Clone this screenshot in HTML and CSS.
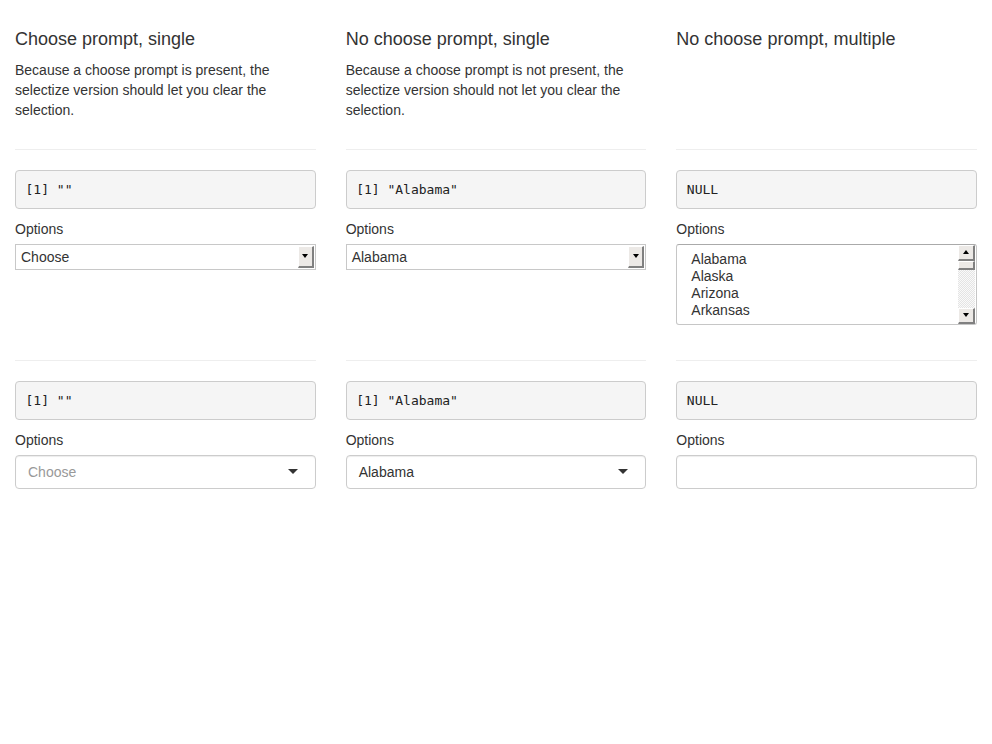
FILE: index.html
```html
<!DOCTYPE html>
<html>
<head>
<meta charset="utf-8">
<link rel="stylesheet" href="styles.css">
</head>
<body>
<div class="page">
  <div class="cell">
    <h4>Choose prompt, single</h4>
    <p>Because a choose prompt is present, the selectize version should let you clear the selection.</p>
  </div>
  <div class="cell">
    <h4>No choose prompt, single</h4>
    <p>Because a choose prompt is not present, the selectize version should not let you clear the selection.</p>
  </div>
  <div class="cell">
    <h4>No choose prompt, multiple</h4>
  </div>

  <div class="cell">
    <hr>
    <pre>[1] ""</pre>
    <div class="form-group">
      <label class="control-label">Options</label>
      <div class="native-select"><span class="ns-text">Choose</span><span class="ns-btn"><span class="tri-down"></span></span></div>
    </div>
  </div>
  <div class="cell">
    <hr>
    <pre>[1] "Alabama"</pre>
    <div class="form-group">
      <label class="control-label">Options</label>
      <div class="native-select"><span class="ns-text">Alabama</span><span class="ns-btn"><span class="tri-down"></span></span></div>
    </div>
  </div>
  <div class="cell">
    <hr>
    <pre>NULL</pre>
    <div class="form-group">
      <label class="control-label">Options</label>
      <div class="listbox">
        <div class="lb-options">
          <div class="lb-opt">Alabama</div>
          <div class="lb-opt">Alaska</div>
          <div class="lb-opt">Arizona</div>
          <div class="lb-opt">Arkansas</div>
        </div>
        <div class="sb">
          <div class="sb-btn"><span class="tri-up"></span></div>
          <div class="sb-thumb"></div>
          <div class="sb-track"></div>
          <div class="sb-btn"><span class="tri-down"></span></div>
        </div>
      </div>
    </div>
  </div>

  <div class="cell">
    <hr>
    <pre>[1] ""</pre>
    <div class="form-group">
      <label class="control-label">Options</label>
      <div class="selectize single"><span class="placeholder">Choose</span></div>
    </div>
  </div>
  <div class="cell">
    <hr>
    <pre>[1] "Alabama"</pre>
    <div class="form-group">
      <label class="control-label">Options</label>
      <div class="selectize single"><span class="item">Alabama</span></div>
    </div>
  </div>
  <div class="cell">
    <hr>
    <pre>NULL</pre>
    <div class="form-group">
      <label class="control-label">Options</label>
      <div class="selectize multi"></div>
    </div>
  </div>
</div>
</body>
</html>
```

FILE: styles.css
```css
html, body {
  margin: 0;
  padding: 0;
  background: #fff;
}
body {
  font-family: "Liberation Sans", Arial, sans-serif;
  font-size: 14px;
  line-height: 20px;
  color: #333;
}
.page {
  display: grid;
  grid-template-columns: repeat(3, minmax(0, 1fr));
  column-gap: 30px;
  padding: 20px 15px 0;
  align-items: start;
}
.cell {
  min-width: 0;
}
h4 {
  font-size: 18px;
  font-weight: 500;
  line-height: 1.1;
  margin: 10px 0;
  color: #333;
}
p {
  margin: 0 0 9px;
}
hr {
  margin: 20px 0;
  border: 0;
  border-top: 1px solid #eee;
  height: 0;
}
pre {
  display: block;
  margin: 0 0 10px;
  padding: 9px 9.5px;
  font-family: "DejaVu Sans Mono", Menlo, monospace;
  font-size: 13px;
  line-height: 19px;
  color: #222;
  background: #f5f5f5;
  border: 1px solid #ccc;
  border-radius: 4px;
  white-space: pre;
}
.form-group {
  margin-bottom: 15px;
}
.control-label {
  display: inline-block;
  margin-bottom: 5px;
  font-weight: normal;
}
.native-select {
  display: flex;
  align-items: center;
  height: 26px;
  box-sizing: border-box;
  border: 1px solid #c8c8c8;
  background: #fff;
}
.ns-text {
  flex: 1;
  padding-left: 5px;
  color: #333;
}
.ns-btn {
  width: 16px;
  height: 22px;
  box-sizing: border-box;
  margin-right: 1px;
  display: flex;
  align-items: center;
  justify-content: center;
  background: #ece9e6;
  border-top: 1px solid #fff;
  border-left: 1px solid #fff;
  border-right: 2px solid #808080;
  border-bottom: 2px solid #808080;
}
.tri-down {
  width: 0;
  height: 0;
  border-left: 3.5px solid transparent;
  border-right: 3.5px solid transparent;
  border-top: 4px solid #000;
}
.tri-up {
  width: 0;
  height: 0;
  border-left: 3.5px solid transparent;
  border-right: 3.5px solid transparent;
  border-bottom: 4px solid #000;
}
.listbox {
  display: flex;
  height: 81px;
  box-sizing: border-box;
  border: 1px solid #c6c6c6;
  border-top-color: #aaa;
  border-radius: 3px;
  background: #fff;
  overflow: hidden;
}
.lb-options {
  flex: 1;
  padding: 6px 0 0 14px;
}
.lb-opt {
  line-height: 17px;
  height: 17px;
  color: #333;
}
.sb {
  width: 17px;
  margin-right: 1px;
  display: flex;
  flex-direction: column;
}
.sb-btn {
  height: 16px;
  box-sizing: border-box;
  display: flex;
  align-items: center;
  justify-content: center;
  background: #ece9e6;
  border-top: 1px solid #fff;
  border-left: 1px solid #fff;
  border-right: 2px solid #808080;
  border-bottom: 2px solid #808080;
}
.sb-thumb {
  height: 9px;
  box-sizing: border-box;
  background: #ece9e6;
  border-top: 1px solid #fff;
  border-left: 1px solid #fff;
  border-right: 2px solid #808080;
  border-bottom: 2px solid #808080;
}
.sb-track {
  flex: 1;
  background: repeating-conic-gradient(#e4e4e4 0 25%, #fafafa 0 50%) 0 0 / 2px 2px;
}
.selectize {
  position: relative;
  box-sizing: border-box;
  min-height: 34px;
  padding: 6px 12px;
  border: 1px solid #ccc;
  border-radius: 4px;
  background: #fff;
  box-shadow: inset 0 1px 1px rgba(0, 0, 0, 0.075);
  line-height: 20px;
}
.selectize.single::after {
  content: "";
  position: absolute;
  top: 50%;
  right: 17px;
  margin-top: -3px;
  width: 0;
  height: 0;
  border-style: solid;
  border-width: 5px 5px 0 5px;
  border-color: #333 transparent transparent transparent;
}
.placeholder {
  color: #999;
}
.item {
  color: #333;
}
```
